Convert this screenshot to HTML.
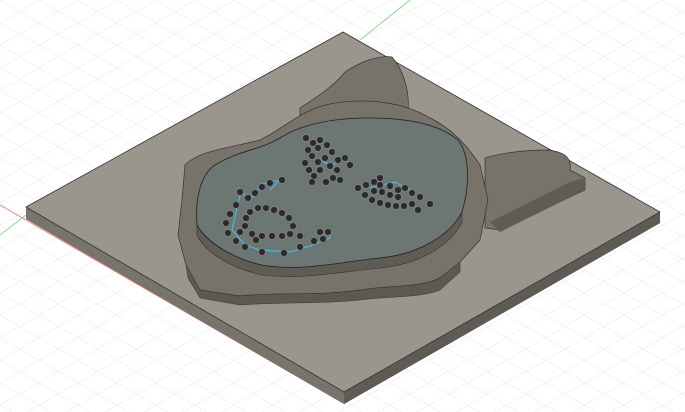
<!DOCTYPE html><html><head><style>html,body{margin:0;padding:0;background:#fff;width:685px;height:412px;overflow:hidden}</style></head><body>
<svg width="685" height="412" viewBox="0 0 685 412" xmlns="http://www.w3.org/2000/svg">
<defs>
<pattern id="g1" width="40" height="22.5" patternUnits="userSpaceOnUse" patternTransform="skewY(30)">
<path d="M0 0H40" stroke="#dcdcdc" stroke-width="0.8" fill="none"/></pattern>
<pattern id="g2" width="40" height="22.5" patternUnits="userSpaceOnUse" patternTransform="skewY(-30)">
<path d="M0 0H40" stroke="#dcdcdc" stroke-width="0.8" fill="none"/></pattern>
</defs>
<rect width="685" height="412" fill="#fff"/>
<rect width="685" height="412" fill="url(#g1)"/>
<rect width="685" height="412" fill="url(#g2)"/>
<line x1="360" y1="40" x2="410" y2="0" stroke="#8fd88f" stroke-width="1"/>
<line x1="0" y1="235" x2="26" y2="215" stroke="#8fd88f" stroke-width="1"/>
<line x1="0" y1="205" x2="345" y2="404" stroke="#e88" stroke-width="1"/>
<polygon points="26,207 343,32 660,212 660,223 344,404 26,219" fill="#6e6b64"/>
<polygon points="26,207 344,392 344,404 26,219" fill="#77746c"/>
<polygon points="344,392 660,212 660,223 344,404" fill="#5e5b55"/>
<polygon points="26,207 343,32 660,212 344,392" fill="#9a968e" stroke="#333" stroke-width="0.8"/>
<path d="M300,108 C320,95 335,85 345,72 C360,62 378,55 392,57 C402,68 410,90 408,110 L405,122 L300,120 Z" fill="#77736a" stroke="#333" stroke-width="0.7"/>
<path d="M485,158 C505,152 525,150 548,150 C565,152 572,158 570,170 L585,178 L585,190 L500,230 L485,228 Z" fill="#77736a" stroke="#333" stroke-width="0.7"/>
<path d="M490,222 L570,182 L585,178 L585,190 L500,232 Z" fill="#5f5c55"/>
<path d="M185,165 C200,150 230,148 260,140 C285,128 300,110 330,104 C360,98 400,100 430,118 C455,130 470,150 480,165 L488,200 L480,240 L460,262 L440,278 C420,288 390,285 360,290 C320,296 280,292 240,296 L200,290 L186,265 L178,235 L182,200 Z" fill="#77736a" stroke="#333" stroke-width="0.7"/>
<path d="M186,265 L200,290 L240,296 C280,292 320,296 360,290 C390,285 420,288 440,278 L460,262 L460,272 L440,290 C420,298 390,296 360,300 C320,304 280,302 240,305 L200,298 L188,278 Z" fill="#5c5952" stroke="#333" stroke-width="0.5"/>
<path d="M197,225 C205,240 230,258 262,265 C300,272 340,262 380,258 C420,254 450,235 462,212 L462,222 C450,246 420,264 380,268 C340,272 300,280 262,275 C230,268 205,252 197,235 Z" fill="#5f5c55" stroke="#333" stroke-width="0.6"/>
<path d="M197,225 C195,200 200,175 215,165 C240,150 260,150 280,138 C300,125 330,118 370,118 C410,118 440,125 458,140 C470,155 470,185 462,212 C450,235 420,254 380,258 C340,262 300,272 262,265 C230,258 205,240 197,225 Z" fill="#6c7773" stroke="#222" stroke-width="0.8"/>
<g stroke="#4ab4e6" stroke-width="1.2" fill="none">
<polyline points="238,188 250,200 262,184 280,180 270,190"/>
<polyline points="240,195 232,230 245,245 260,250 290,252 310,246 330,238 328,230"/>
<polyline points="318,160 332,165 345,158"/>
<polyline points="370,188 395,182 410,190"/>
</g>
<g fill="#2b2b2b" stroke="#888" stroke-width="0.6">
<circle cx="306" cy="138" r="3.4"/><circle cx="313" cy="143" r="3.4"/><circle cx="320" cy="140" r="3.4"/><circle cx="327" cy="145" r="3.4"/><circle cx="332" cy="152" r="3.4"/><circle cx="345" cy="158" r="3.4"/><circle cx="308" cy="150" r="3.4"/><circle cx="312" cy="156" r="3.4"/><circle cx="305" cy="163" r="3.4"/><circle cx="309" cy="170" r="3.4"/><circle cx="314" cy="176" r="3.4"/><circle cx="320" cy="170" r="3.4"/><circle cx="318" cy="162" r="3.4"/><circle cx="325" cy="158" r="3.4"/><circle cx="330" cy="166" r="3.4"/><circle cx="337" cy="170" r="3.4"/><circle cx="333" cy="178" r="3.4"/><circle cx="326" cy="182" r="3.4"/><circle cx="340" cy="180" r="3.4"/><circle cx="350" cy="165" r="3.4"/><circle cx="318" cy="148" r="3.4"/><circle cx="338" cy="160" r="3.4"/><circle cx="312" cy="182" r="3.4"/>
<circle cx="358" cy="188" r="3.4"/><circle cx="366" cy="185" r="3.4"/><circle cx="374" cy="182" r="3.4"/><circle cx="380" cy="178" r="3.4"/><circle cx="390" cy="186" r="3.4"/><circle cx="398" cy="190" r="3.4"/><circle cx="405" cy="188" r="3.4"/><circle cx="412" cy="193" r="3.4"/><circle cx="420" cy="197" r="3.4"/><circle cx="430" cy="204" r="3.4"/><circle cx="365" cy="195" r="3.4"/><circle cx="372" cy="200" r="3.4"/><circle cx="380" cy="203" r="3.4"/><circle cx="388" cy="205" r="3.4"/><circle cx="396" cy="206" r="3.4"/><circle cx="404" cy="206" r="3.4"/><circle cx="412" cy="204" r="3.4"/><circle cx="418" cy="210" r="3.4"/><circle cx="374" cy="191" r="3.4"/><circle cx="382" cy="192" r="3.4"/><circle cx="390" cy="195" r="3.4"/><circle cx="398" cy="197" r="3.4"/><circle cx="380" cy="185" r="3.4"/>
<circle cx="282" cy="180" r="3.4"/><circle cx="270" cy="183" r="3.4"/><circle cx="262" cy="187" r="3.4"/><circle cx="255" cy="193" r="3.4"/><circle cx="248" cy="198" r="3.4"/><circle cx="240" cy="192" r="3.4"/><circle cx="236" cy="205" r="3.4"/><circle cx="230" cy="214" r="3.4"/><circle cx="226" cy="223" r="3.4"/><circle cx="228" cy="233" r="3.4"/><circle cx="236" cy="241" r="3.4"/><circle cx="245" cy="247" r="3.4"/><circle cx="262" cy="252" r="3.4"/><circle cx="284" cy="253" r="3.4"/><circle cx="300" cy="247" r="3.4"/><circle cx="314" cy="241" r="3.4"/><circle cx="323" cy="239" r="3.4"/><circle cx="328" cy="232" r="3.4"/><circle cx="320" cy="232" r="3.4"/><circle cx="250" cy="212" r="3.4"/><circle cx="258" cy="208" r="3.4"/><circle cx="266" cy="208" r="3.4"/><circle cx="274" cy="210" r="3.4"/><circle cx="282" cy="213" r="3.4"/><circle cx="289" cy="218" r="3.4"/><circle cx="293" cy="226" r="3.4"/><circle cx="290" cy="234" r="3.4"/><circle cx="282" cy="236" r="3.4"/><circle cx="272" cy="236" r="3.4"/><circle cx="262" cy="236" r="3.4"/><circle cx="252" cy="234" r="3.4"/><circle cx="245" cy="226" r="3.4"/><circle cx="246" cy="218" r="3.4"/><circle cx="256" cy="240" r="3.4"/><circle cx="300" cy="236" r="3.4"/><circle cx="240" cy="232" r="3.4"/>
</g>
</svg>
</body></html>
